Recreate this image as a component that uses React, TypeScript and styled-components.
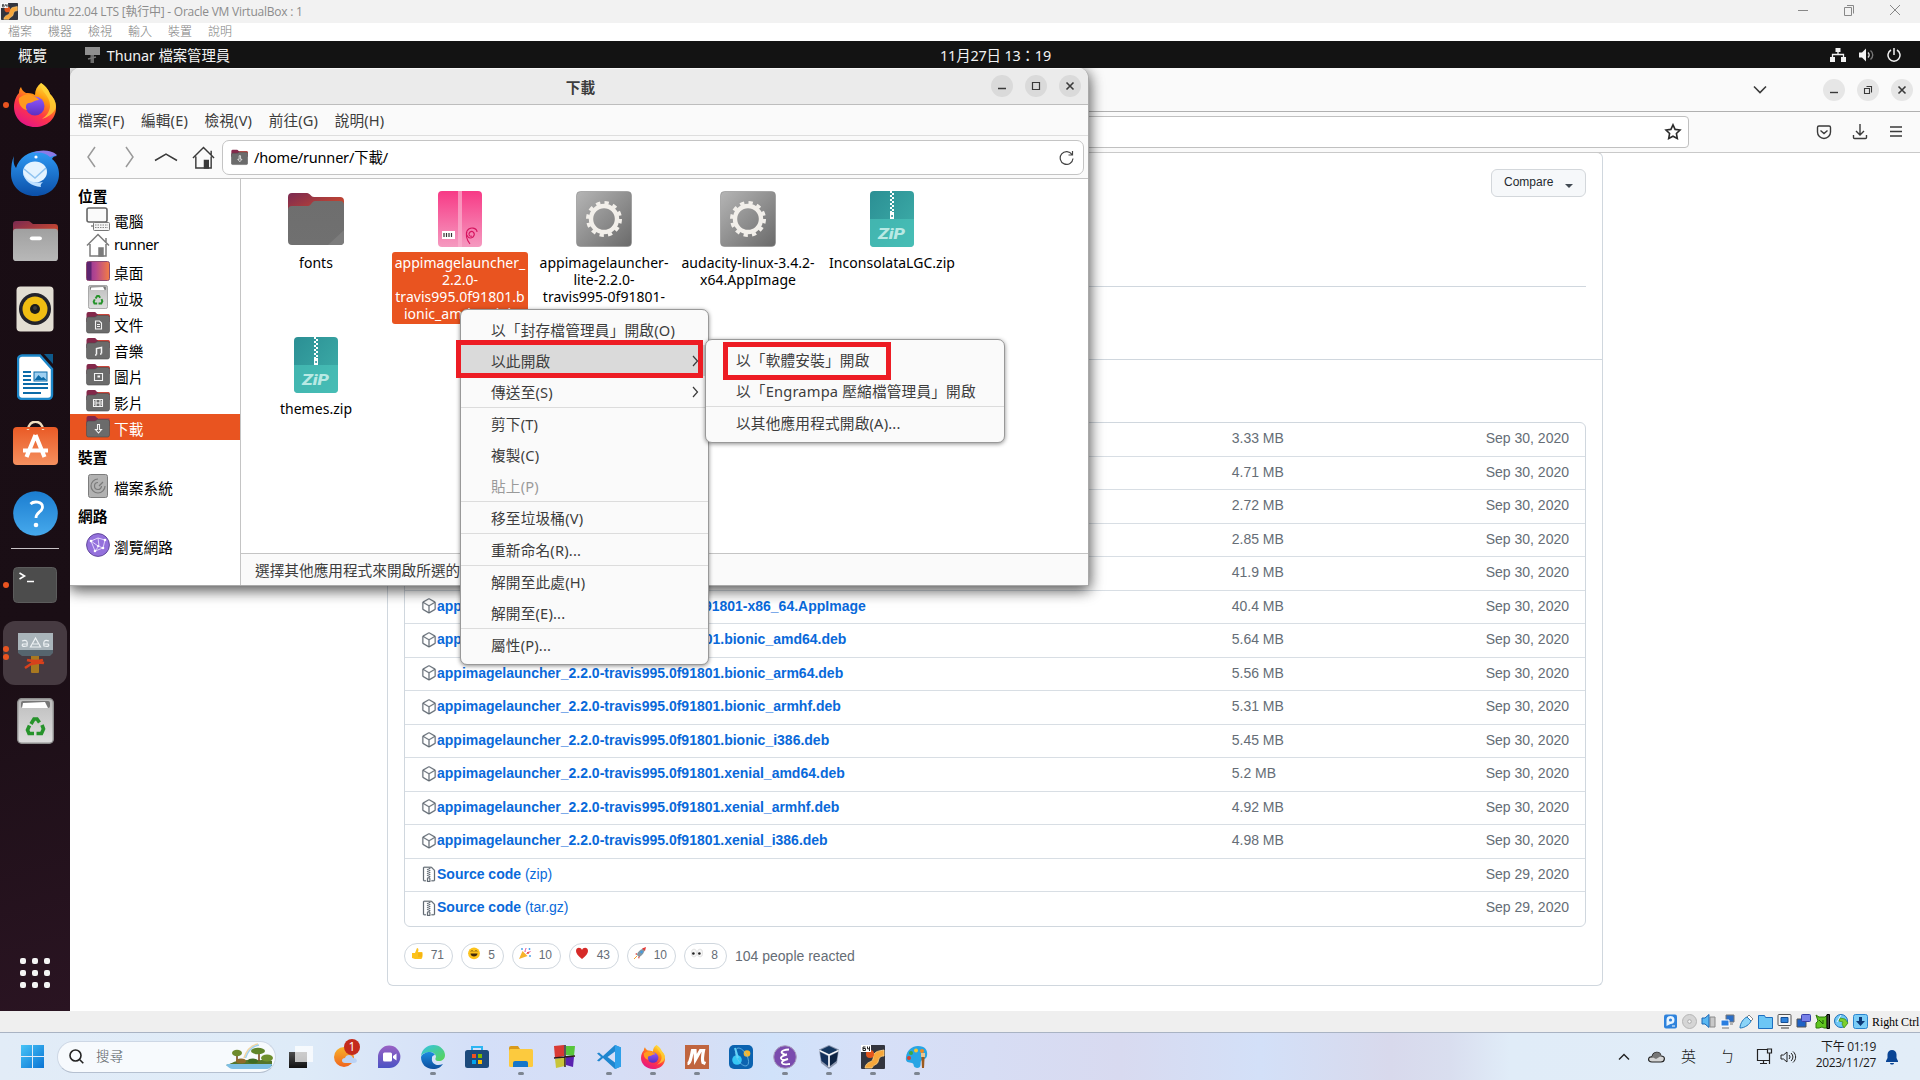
import React from "react";
import styled, { createGlobalStyle } from "styled-components";
import { GoPackage, GoFileZip } from "react-icons/go";

const ubuntu = `"Noto Sans", "Noto Sans CJK TC", sans-serif`;
const arial = `"Liberation Sans", "Noto Sans CJK TC", sans-serif`;
const segoe = `"Open Sans", "Noto Sans CJK TC", sans-serif`;

const Global = createGlobalStyle`
  * { box-sizing: border-box; }
  body { margin: 0; background: #fff; overflow: hidden; }
  svg { display: block; flex: none; }
`;

const Screen = styled.div`
  width: 1920px;
  height: 1080px;
  display: flex;
  flex-direction: column;
  overflow: hidden;
  font-family: ${ubuntu};
`;

/* ---------- VirtualBox frame ---------- */
const HostTitle = styled.header`
  height: 23px;
  flex: none;
  display: flex;
  align-items: center;
  padding: 0 17px 1px 1px;
  background: #f2f2f2;
  color: #8c8c8c;
  font: 12px/20px ${segoe};
  letter-spacing: -0.24px;
`;
const HostCaption = styled.span`
  margin-left: 6px;
  padding-top: 1px;
  flex: 1;
  white-space: nowrap;
`;
const HostControls = styled.div`
  display: flex;
  gap: 30px;
  padding-bottom: 2px;
`;
const HostMenu = styled.nav`
  height: 18px;
  flex: none;
  display: flex;
  gap: 16px;
  padding-left: 8px;
  background: #fff;
  color: #808080;
  font: 12px/16px "Noto Sans CJK TC", sans-serif;
  font-weight: 300;
`;
const VmStatus = styled.footer`
  height: 21px;
  flex: none;
  display: flex;
  align-items: center;
  justify-content: flex-end;
  gap: 4px;
  padding-right: 1px;
  background: #efefef;
  color: #000;
  font: 12px/20px "Liberation Serif", serif;
`;
const HostKey = styled.span`
  width: 47px;
  white-space: nowrap;
  letter-spacing: -0.1px;
`;

/* ---------- GNOME shell ---------- */
const TopBar = styled.div`
  height: 27px;
  flex: none;
  display: grid;
  grid-template-columns: 922px 120px 1fr;
  align-items: center;
  padding: 0 19px 0 18px;
  background: #131313;
  color: #f2f2f2;
  font-size: 14.4px;
  line-height: 26px;
  white-space: nowrap;
`;
const TopLeft = styled.div`
  display: flex;
  align-items: center;
  padding-top: 1px;
`;
const AppName = styled.span`
  margin-left: 7px;
  letter-spacing: -0.1px;
`;
const AppIcon = styled.span`
  margin-left: 38px;
`;
const Clock = styled.span`
  padding-top: 2px;
  letter-spacing: -0.15px;
`;
const TopRight = styled.div`
  display: flex;
  justify-content: flex-end;
  gap: 13px;
`;
const Guest = styled.div`
  flex: 1;
  display: flex;
  min-height: 0;
`;
const Dock = styled.aside`
  width: 70px;
  flex: none;
  display: flex;
  flex-direction: column;
  padding: 3px 0 13px;
  background: linear-gradient(165deg, #190d14 0%, #1a0e15 60%, #2a1422 100%);
`;
const Slot = styled.div<{ $active?: boolean; $lift?: number }>`
  position: relative;
  width: 64px;
  height: 64px;
  margin: 2px 3px;
  padding-bottom: ${(p) => p.$lift ?? 0}px;
  flex: none;
  display: flex;
  align-items: center;
  justify-content: center;
  border-radius: 12px;
  background: ${(p) => (p.$active ? "#463a41" : "transparent")};
`;
const Dots = styled.span`
  position: absolute;
  left: 0;
  top: 0;
  height: 100%;
  display: flex;
  flex-direction: column;
  justify-content: center;
  gap: 2px;
`;
const RunDot = styled.i`
  width: 6px;
  height: 6px;
  border-radius: 50%;
  background: #e95420;
`;
const DockRule = styled.div`
  height: 1px;
  margin: 1px 11px 2px;
  flex: none;
  background: #c8c3c6;
`;
const AppGrid = styled.div`
  margin: auto auto 10px;
  display: grid;
  grid-template-columns: repeat(3, 6px);
  gap: 6px;
`;
const GridDot = styled.i`
  height: 6px;
  border-radius: 2px;
  background: #f4f4f4;
`;
const Desktop = styled.main`
  position: relative;
  flex: 1;
  overflow: hidden;
`;

/* ---------- Browser ---------- */
const Browser = styled.section`
  height: 100%;
  display: flex;
  flex-direction: column;
  background: #fff;
`;
const TabStrip = styled.div`
  height: 44px;
  flex: none;
  display: flex;
  align-items: center;
  justify-content: flex-end;
  gap: 12px;
  padding-right: 7px;
  background: #fafafa;
  border-bottom: 1px solid #b0b0b0;
`;
const TabChevron = styled.span`
  margin-right: 44px;
`;
const RoundButton = styled.button<{ $tone: string }>`
  width: 22px;
  height: 22px;
  padding: 0;
  border: 0;
  border-radius: 50%;
  display: grid;
  place-items: center;
  background: ${(p) => p.$tone};
`;
const NavBar = styled.div`
  height: 41px;
  flex: none;
  display: flex;
  align-items: center;
  padding-right: 16px;
  background: #fafafa;
  border-bottom: 1px solid #c9c9c9;
`;
const UrlField = styled.div`
  width: 1519px;
  height: 32px;
  margin: 0 127px 0 100px;
  display: flex;
  align-items: center;
  justify-content: flex-end;
  padding-right: 6px;
  background: #fff;
  border: 1px solid #c0c0c0;
  border-radius: 4px;
`;
const NavIcons = styled.div`
  display: flex;
  gap: 20px;
`;
const Page = styled.div`
  flex: 1;
  padding-left: 317px;
  font-family: ${arial};
`;
const Release = styled.article`
  width: 1216px;
  height: 834px;
  margin-top: -1px;
  border: 1px solid #d0d7de;
  border-top-color: #c9c9c9;
  border-radius: 6px;
`;
const ReleaseHead = styled.div`
  height: 134px;
  margin: 0 16px;
  padding-top: 16px;
  display: flex;
  justify-content: flex-end;
  align-items: flex-start;
  border-bottom: 1px solid #d0d7de;
`;
const CompareButton = styled.button`
  width: 95px;
  height: 28px;
  padding: 0 12px 3px;
  display: flex;
  align-items: center;
  justify-content: space-between;
  border: 1px solid #d3d7db;
  border-radius: 6px;
  background: #f6f8fa;
  color: #24292f;
  font: 500 12px/20px ${arial};
`;
const CaretDown = styled.i`
  margin-top: 8px;
  border: 4px solid transparent;
  border-top-color: #424a53;
  border-bottom: 0;
`;
const ReleaseBody = styled.div`
  height: 73px;
  border-bottom: 1px solid #d0d7de;
`;
const Assets = styled.ul`
  width: 1182px;
  height: 505px;
  margin: 62px 0 0 16px;
  padding: 0;
  list-style: none;
  border: 1px solid #d0d7de;
  border-radius: 6px;
`;
const Asset = styled.li`
  display: flex;
  align-items: center;
  height: 33px;
  padding: 0 16px 3px;
  color: #656d76;
  font-size: 14px;
  line-height: 20px;
  white-space: nowrap;
  border-top: 1px solid #d8dee4;
  &:nth-child(odd) { height: 34px; }
  &:first-child { border-top: 0; height: 33px; }
  & > svg { margin-top: 1px; stroke: currentColor; stroke-width: 0.35; }
`;
const AssetName = styled.a`
  flex: 1;
  color: #0969da;
`;
const AssetSize = styled.span`
  width: 254px;
`;
const Reactions = styled.div`
  display: flex;
  align-items: center;
  gap: 8px;
  margin: 16px 0 0 16px;
  color: #656d76;
  font-size: 14px;
`;
const Pill = styled.span<{ $w: number }>`
  width: ${(p) => p.$w}px;
  height: 26px;
  display: flex;
  justify-content: space-between;
  padding: 3px 8px 0 6px;
  border: 1px solid #d0d7de;
  border-radius: 13px;
  font-size: 12px;
  line-height: 17px;
`;

/* ---------- Thunar ---------- */
const Window = styled.section`
  position: absolute;
  left: 0;
  top: 0;
  width: 1019px;
  height: 518px;
  display: flex;
  flex-direction: column;
  background: #fafafa;
  border-radius: 10px 10px 0 0;
  border: solid #a9a9a9;
  border-width: 0 1px 1px 0;
  box-shadow: 0 3px 14px rgba(0, 0, 0, 0.45), 0 4px 16px rgba(0, 0, 0, 0.4);
  color: #3d3d3d;
  font-size: 14.67px;
  overflow: hidden;
`;
const WinTitle = styled.div`
  height: 37px;
  flex: none;
  display: grid;
  grid-template-columns: 1fr auto 1fr;
  align-items: center;
  padding: 0 7px 0 10px;
  background: #ebebeb;
  border-bottom: 1px solid #bdbdbd;
  border-top: 1px solid #f8f8f8;
  font-weight: 700;
  line-height: 30px;
`;
const WinButtons = styled.div`
  display: flex;
  justify-content: flex-end;
  gap: 12px;
  padding-bottom: 2px;
`;
const WinMenu = styled.nav`
  height: 31px;
  flex: none;
  display: flex;
  align-items: center;
  gap: 16.5px;
  padding: 0 0 0 8px;
  border-bottom: 1px solid #dedede;
  line-height: 28px;
`;
const MenuTitle = styled.span`
  letter-spacing: 0.15px;
`;
const ToolRow = styled.div`
  height: 43px;
  flex: none;
  display: flex;
  align-items: center;
  padding: 0 4px 0 10px;
  border-bottom: 1px solid #c4c4c4;
`;
const Tool = styled.span<{ $w: number; $gap?: number }>`
  width: ${(p) => p.$w}px;
  margin-left: ${(p) => p.$gap ?? 0}px;
  flex: none;
  display: flex;
  justify-content: center;
`;
const PathField = styled.div`
  flex: 1;
  height: 35px;
  display: flex;
  align-items: center;
  gap: 6px;
  padding: 0 9px 0 8px;
  background: #fff;
  border: 1px solid #c4c4c4;
  border-radius: 7px;
  color: #000;
`;
const PathText = styled.span`
  flex: 1;
  letter-spacing: -0.2px;
  font-size: 14.5px;
  line-height: 24px;
`;
const WinBody = styled.div`
  flex: 1;
  display: flex;
  min-height: 0;
`;
const Side = styled.aside`
  width: 171px;
  flex: none;
  background: #fff;
  border-right: 1px solid #c4c4c4;
  color: #000;
`;
const SideHead = styled.h3<{ $first?: boolean }>`
  margin: 0;
  height: ${(p) => (p.$first ? 27 : 33)}px;
  padding: 4px 0 0 8px;
  font-size: 14.67px;
  line-height: 27px;
  font-weight: 700;
`;
const SideRow = styled.div<{ $on?: boolean }>`
  height: 26px;
  display: flex;
  align-items: center;
  gap: 4px;
  padding-left: 16px;
  line-height: 26px;
  background: ${(p) => (p.$on ? "#e95420" : "transparent")};
  color: ${(p) => (p.$on ? "#fff" : "#000")};
`;
const SideLabel = styled.span<{ $latin?: boolean }>`
  padding-top: ${(p) => (p.$latin ? 0 : 3)}px;
  margin-top: ${(p) => (p.$latin ? -2 : 0)}px;
  letter-spacing: ${(p) => (p.$latin ? "-0.5px" : "0.1px")};
`;
const PlaceIcon = styled.span`
  width: 24px;
  display: flex;
  justify-content: center;
`;
const Main = styled.div`
  flex: 1;
  display: flex;
  flex-direction: column;
  background: #fff;
`;
const Files = styled.div`
  flex: 1;
  display: grid;
  grid-template-columns: repeat(5, 144px);
  grid-auto-rows: 146px;
  padding: 11px 0 0 3px;
`;
const FileCell = styled.div`
  display: flex;
  flex-direction: column;
  align-items: center;
  color: #000;
`;
const IconBox = styled.div`
  height: 58px;
  display: flex;
  align-items: center;
`;
const FileLabel = styled.div<{ $on?: boolean }>`
  width: ${(p) => (p.$on ? "136px" : "142px")};
  margin-top: 4px;
  padding: 2px 0;
  border-radius: 3px;
  background: ${(p) => (p.$on ? "#e95420" : "transparent")};
  color: ${(p) => (p.$on ? "#fff" : "#000")};
  font-size: 14px;
  line-height: 17px;
  letter-spacing: 0.03px;
  text-align: center;
  white-space: pre;
`;
const WinStatus = styled.div`
  height: 32px;
  padding-left: 14px;
  background: #fafafa;
  border-top: 1px solid #c4c4c4;
  line-height: 33px;
`;

/* ---------- Popup menus ---------- */
const Popup = styled.div<{ $x: number; $y: number; $w: number; $h: number }>`
  position: absolute;
  left: ${(p) => p.$x}px;
  top: ${(p) => p.$y}px;
  width: ${(p) => p.$w}px;
  height: ${(p) => p.$h}px;
  padding-top: 4px;
  background: #fafafa;
  border: 1px solid #999;
  border-radius: 7px;
  box-shadow: 0 1px 4px rgba(0, 0, 0, 0.45);
  color: #3d3d3d;
`;
const Item = styled.div<{ $on?: boolean; $off?: boolean; $rule?: boolean }>`
  height: ${(p) => (p.$rule ? 32 : 31)}px;
  display: flex;
  align-items: center;
  justify-content: space-between;
  padding: 0 9px 0 30px;
  background: ${(p) => (p.$on ? "#dadada" : "transparent")};
  color: ${(p) => (p.$off ? "#9a9a9a" : "#3d3d3d")};
  border-bottom: ${(p) => (p.$rule ? "1px solid #dcdcdc" : "0")};
  font-size: 14.67px;
  line-height: 26px;
  letter-spacing: 0.18px;
  white-space: nowrap;
`;
const Mark = styled.div<{ $x: number; $y: number; $w: number; $h: number }>`
  position: absolute;
  left: ${(p) => p.$x}px;
  top: ${(p) => p.$y}px;
  width: ${(p) => p.$w}px;
  height: ${(p) => p.$h}px;
  border: 5px solid #ed1c24;
`;

/* ---------- Windows taskbar ---------- */
const Taskbar = styled.footer`
  height: 48px;
  flex: none;
  display: flex;
  align-items: center;
  padding: 0 21px;
  border-top: 1px solid #a9b3c3;
  background: linear-gradient(90deg, #e2ecf7 0, #deebf8 300px, #d4dff8 480px, #d6def6 620px, #d8ddf3 670px, #d0e2fa 770px, #d6e0f8 860px, #d8daf0 1120px, #d3e0f8 1260px, #d8d9ec 1390px, #d9deef 1450px, #e0ecf8 1510px, #e2edf8 100%);
  font-family: ${segoe};
`;
const SearchBox = styled.div`
  width: 219px;
  height: 32px;
  margin: 0 13px;
  padding: 0 1px 0 11px;
  display: flex;
  align-items: center;
  gap: 12px;
  border-radius: 16px;
  background: #f7fafd;
  border: 1px solid #cdd7e5;
  border-bottom-color: #b5c0d0;
  color: #55595e;
  font: 13.5px/28px "Noto Sans CJK TC", sans-serif;
  font-weight: 300;
`;
const SearchLabel = styled.span`
  flex: 1;
  padding-bottom: 3px;
  white-space: nowrap;
`;
const Apps = styled.div`
  display: flex;
  gap: 20px;
`;
const TaskApp = styled.div`
  position: relative;
  width: 24px;
  height: 24px;
`;
const RunBar = styled.i`
  position: absolute;
  left: 9px;
  top: 27px;
  width: 6px;
  height: 3px;
  border-radius: 2px;
  background: #7d8591;
`;
const Badge = styled.b`
  position: absolute;
  right: -3px;
  top: -6px;
  width: 16px;
  height: 16px;
  border-radius: 50%;
  background: #c42b1c;
  color: #fff;
  font: 12px/16px ${segoe};
  text-align: center;
`;
const Tray = styled.div`
  margin-left: auto;
  display: flex;
  align-items: center;
  color: #1b1b1b;
`;
const Ime = styled.span<{ $ml: number }>`
  width: 16px;
  margin-left: ${(p) => p.$ml}px;
  padding-bottom: 2px;
  font: 15px/24px "Noto Sans CJK TC", sans-serif;
  font-weight: 300;
`;
const TrayGap = styled.span<{ $ml: number }>`
  margin-left: ${(p) => p.$ml}px;
`;
const TrayClock = styled.div`
  width: 63px;
  margin: -3px 9px 0 16px;
  text-align: right;
  font-size: 12px;
  line-height: 16.5px;
  letter-spacing: -0.35px;
  white-space: nowrap;
`;

/* ---------- Drawings ---------- */
const Grad = ({ id, a, b, h }: { id: string; a: string; b: string; h?: boolean }) => (
  <linearGradient id={id} x1="0" y1="0" x2={h ? "1" : "0"} y2="1">
    <stop offset="0" stopColor={a} />
    <stop offset="1" stopColor={b} />
  </linearGradient>
);

const Firefox = ({ w, h, id }: { w: number; h: number; id: string }) => (
  <svg width={w} height={h} viewBox="0 0 42 44" preserveAspectRatio="none">
    <defs>
      <linearGradient id={id} x1=".85" y1="0" x2=".3" y2="1">
        <stop offset="0" stopColor="#fff44f" />
        <stop offset=".35" stopColor="#ff980e" />
        <stop offset=".65" stopColor="#ff3647" />
        <stop offset="1" stopColor="#e31587" />
      </linearGradient>
      <Grad id={id + "p"} a="#9059ff" b="#5b2fc0" />
    </defs>
    <path fill={`url(#${id})`} d="M27 0c6 4 8 8 9 11 5 5 6 10 6 14 0 11-9 19-21 19S0 35 0 24C0 17 3 12 5 10c0-3 1-5 2-6 1 3 2 4 5 6 2 0 6 0 9 2 0-5 2-9 6-12z" />
    <circle cx="21" cy="23" r="9.5" fill={`url(#${id}p)`} />
    <path fill="#ff9a1f" d="M5 15c5-4 11-5 14-2 3 1 5 2 6 4-5 0-6 3-10 3-3 0-4 4-2 7C7 26 4 20 5 15z" />
    <path fill="#ffd43a" opacity=".75" d="M27 0c-2 8 10 12 9 24-1 6-4 9-8 12 12-4 14-11 14-13 0-4-2-8-6-12-1-3-3-7-9-11z" />
  </svg>
);

const Thunderbird = () => (
  <svg width="48" height="46" viewBox="0 0 48 46">
    <defs><Grad id="tb" a="#2f9bf5" b="#0b4fa8" /></defs>
    <path fill="url(#tb)" d="M3 6c-1 6 0 9 2 12C8 8 17 1 30 1c9 0 13 2 16 5-3 0-4 1-5 3 5 4 7 9 7 15 0 13-10 22-24 22S0 36 0 24C0 16 1 10 3 6z" />
    <path fill="#8a7be8" d="M22 3c5-3 17-4 24 2l-7 2C33 2 28 2 22 3z" />
    <circle cx="25" cy="7" r="1.6" fill="#fff" />
    <ellipse cx="24" cy="22" rx="12" ry="10.5" fill="#e4f3ff" />
    <path d="M13 19l11 9 11-10" fill="none" stroke="#8fc3f0" strokeWidth="1.6" />
    <path fill="#bfe0ff" d="M12 22c2 8 10 12 20 10-2 2-3 3-2 5-10-1-17-6-18-15z" />
  </svg>
);

const FolderIcon = ({ w, h, id, drawer }: { w: number; h: number; id: string; drawer?: boolean }) => (
  <svg width={w} height={h} viewBox="0 0 56 52" preserveAspectRatio="none">
    <defs>
      <Grad id={id} a="#7a2a52" b="#e95420" h />
      <Grad id={id + "f"} a={drawer ? "#a0a0a0" : "#6e6e6e"} b={drawer ? "#b8b8b8" : "#707070"} />
    </defs>
    <path fill={`url(#${id})`} d="M0 4a4 4 0 014-4h15c3 0 4 4 7 4h26a4 4 0 014 4v20H0z" />
    <path fill={`url(#${id}f)`} d={drawer ? "M0 14a4 4 0 014-4h48a4 4 0 014 4v34a4 4 0 01-4 4H4a4 4 0 01-4-4z" : "M0 17a4 4 0 014-4h16c3 0 4-5 7-5h25a4 4 0 014 4v36a4 4 0 01-4 4H4a4 4 0 01-4-4z"} />
    {drawer ? <rect x="21" y="20" width="15" height="5" rx="2.5" fill="#fff" /> : <path d="M56 37v11a4 4 0 01-4 4H40z" fill="#7c7c7c" />}
  </svg>
);

const Rhythmbox = () => (
  <svg width="38" height="46" viewBox="0 0 38 46">
    <rect x=".5" y=".5" width="37" height="45" rx="4" fill="#e3ded3" />
    <circle cx="19" cy="23" r="16" fill="#23232b" />
    <circle cx="19" cy="23" r="12.5" fill="#f0bd12" />
    <circle cx="19" cy="23" r="5" fill="#1c1c1c" />
    <circle cx="19" cy="22" r="2" fill="#3c3c3c" />
  </svg>
);
const Writer = () => (
  <svg width="37" height="46" viewBox="0 0 37 46">
    <path d="M5 1.5h18L35 15v26a4 4 0 01-4 4H5a4 4 0 01-4-4V5.5a4 4 0 014-4z" fill="#fff" stroke="#1c86c8" strokeWidth="2.4" />
    <path d="M27 0h9v10z" fill="#0e5a8c" />
    <path d="M6 18h8M6 22h8M6 26h8M6 30h25M6 34h25M6 39h18" stroke="#0d6ba8" strokeWidth="1.8" />
    <rect x="17" y="18" width="13" height="9" fill="#9ed0f2" stroke="#0d6ba8" />
    <path d="M17.5 26l4-5 3 3 2-1 3 3z" fill="#0d6ba8" />
  </svg>
);
const Software = () => (
  <svg width="45" height="44" viewBox="0 0 45 44">
    <defs><Grad id="sw" a="#e95a25" b="#f5905f" /></defs>
    <path d="M15 9c0-11 15-11 15 0" fill="none" stroke="#f0dfc0" strokeWidth="2.4" />
    <rect y="6" width="45" height="38" rx="4" fill="url(#sw)" />
    <path d="M22.5 14L13.500 36M22.500 14l9 22M10 29.500h25" stroke="#fff" strokeWidth="4.200" fill="none" />
    <path d="M15 9v-1M30 9v-1" stroke="#f0dfc0" strokeWidth="2.4" />
  </svg>
);
const HelpIcon = () => (
  <svg width="45" height="45" viewBox="0 0 45 45">
    <defs><Grad id="hp" a="#1b7dd0" b="#46a9ec" /></defs>
    <circle cx="22.5" cy="22.5" r="22.3" fill="url(#hp)" />
    <path d="M17.500 13c3-3 12-3 12 3 0 5-6.500 5-6.500 11" fill="none" stroke="#fff" strokeWidth="2.8" />
    <circle cx="23" cy="34" r="2.3" fill="#fff" />
  </svg>
);
const TerminalIcon = () => (
  <svg width="44" height="36" viewBox="0 0 44 36">
    <rect x=".5" y=".5" width="43" height="35" rx="4" fill="#4c4c4c" stroke="#5c5c5c" />
    <path d="M6.500 6l5 3-5 3M14 14.500h7" fill="none" stroke="#fff" strokeWidth="1.600" />
  </svg>
);
const Hammer = () => (
  <svg width="37" height="42" viewBox="0 0 37 42">
    <rect x="14" y="20" width="8" height="21" rx="1" fill="#a87820" />
    <path d="M1 1h35v19l-3 2H5l-4-2z" fill="#a9b4ba" />
    <path d="M1 18h35v3l-3 3H5l-4-3z" fill="#56656e" />
    <path d="M5 9c5-2 6 1 5 5-4 1-6 0-4-2h4M18.500 6l-5 9h10zM16 12h5M32 9c-5-2-6 1-5 5 4 1 6 0 4-2h-4" fill="none" stroke="#eef2f4" strokeWidth="1.200" />
    <path d="M10 28c4 1 10 2 16 0M14 32c5-1 9-2 13-1M17 30l-9 6" stroke="#d8401c" strokeWidth="2.600" fill="none" />
  </svg>
);
const Recycle = ({ w, h }: { w: number; h: number }) => (
  <svg width={w} height={h} viewBox="0 0 37 46" preserveAspectRatio="none">
    <defs><Grad id="tr" a="#bdbdbd" b="#dedede" /></defs>
    <rect x=".7" y=".7" width="35.6" height="44.6" rx="4" fill="url(#tr)" stroke="#8d8d8d" strokeWidth="1.4" />
    <rect x="4" y="3" width="29" height="7" rx="2" fill="#777" />
    <path d="M6 5l22-1 3 6H5z" fill="#fff" />
    <g fill="none" stroke="#26932b" strokeWidth="3.600">
      <path d="M14 26l3-5h3l2.500 3.500" />
      <path d="M25 27l1.500 4-2 4.500h-5" />
      <path d="M17 35.500h-5l-1.500-3.500 2-4.500" />
    </g>
  </svg>
);

const GearFile = () => (
  <svg width="56" height="56" viewBox="0 0 56 56">
    <defs><Grad id="gf" a="#b5b5b5" b="#6a6a6a" h /></defs>
    <rect x=".5" y=".5" width="55" height="55" rx="4" fill="url(#gf)" stroke="#8b8b8b" strokeWidth=".6" />
    <circle cx="28" cy="28" r="13" fill="none" stroke="#f2efea" strokeWidth="4.4" />
    <circle cx="28" cy="28" r="16.3" fill="none" stroke="#f2efea" strokeWidth="3.4" strokeDasharray="4.3 4.235" />
  </svg>
);
const DebFile = () => (
  <svg width="44" height="56" viewBox="0 0 44 56">
    <defs><Grad id="df" a="#f73a86" b="#f59ac0" /></defs>
    <rect width="44" height="56" rx="4" fill="url(#df)" />
    <path d="M20 0h4v56h-4z" fill="#fbb0cf" opacity=".7" />
    <rect x="4" y="40" width="13" height="8" fill="#fff" />
    <path d="M6 42v4M8.500 42v4M11 42v4M13.500 42v4" stroke="#333" strokeWidth="1.200" />
    <path d="M34 45c-3 1-4-2-2-4 3-2 6 2 3 5-4 3-8-2-6-6 3-5 10-3 10 1M29 41c-2 4 0 8 3 12" fill="none" stroke="#d6145f" strokeWidth="1.100" />
  </svg>
);
const ZipWord = styled.text`
  font: italic 900 14px "Roboto", sans-serif;
  fill: #b9e9e4;
`;
const ZipFile = ({ id }: { id: string }) => (
  <svg width="44" height="56" viewBox="0 0 44 56">
    <defs><Grad id={id} a="#2b8f94" b="#3fb0aa" h /></defs>
    <rect width="44" height="56" rx="4" fill={`url(#${id})`} />
    <path d="M0 28h44v24a4 4 0 01-4 4H4a4 4 0 01-4-4z" fill="#4cc4bb" opacity=".65" />
    <path d="M21 0v21M23 2v19" stroke="#fff" strokeWidth="2" strokeDasharray="2 2" />
    <rect x="20" y="21" width="4" height="7" fill="#fff" />
    <rect x="21.3" y="24" width="1.5" height="2" fill="#2b8f94" />
    <ZipWord x="8" y="48" textLength="27" lengthAdjust="spacingAndGlyphs">ZiP</ZipWord>
  </svg>
);

const glyphs: Record<string, React.ReactNode> = {
  doc: <path d="M9.500 10h4l2 2v6h-6zM11 13.500h3M11 15.500h3" />,
  music: <path d="M10.500 17.500v-6l5-1v6M9 18h1.500M14 17h1.500" strokeWidth="1.500" />,
  pic: <path d="M8.500 10.500h8v7h-8zM12 13h1.500v1h-1.500z" />,
  film: <path d="M7.500 10.500h9v7h-9zM10 10v8M14 10v8M10 14h4M8 13h1M8 15h1M15 13h1M15 15h1" />,
  down: <path d="M11.500 9.500h2v5h2l-3 3.500-3-3.500h2z" />,
};
const MiniFolder = ({ kind, size = 24 }: { kind: string; size?: number }) => (
  <svg width={size} height={size} viewBox="0 0 24 24">
    <path d="M.5 3a2 2 0 012-2h6c1.500 0 2 2 3 2h10a2 2 0 012 2v6H.5z" fill="#84284a" />
    <path d="M12 3h10a2 2 0 012 2v1H11z" fill="#c8453a" />
    <path d="M.5 8a2 2 0 012-2h6c1.500 0 2-1.500 3-1.500h10a2 2 0 012 2V20a2 2 0 01-2 2h-19a2 2 0 01-2-2z" fill="#6b6b6b" stroke="#4c4c4c" strokeWidth=".6" />
    <g fill="none" stroke="#f3f3f3" strokeWidth="1.1">{glyphs[kind]}</g>
  </svg>
);
const Computer = () => (
  <svg width="24" height="24" viewBox="0 0 24 24">
    <rect x="1" y="1" width="20" height="14" rx="2" fill="#fafafa" stroke="#666" strokeWidth="1.6" />
    <path d="M5 19h3v-3" stroke="#888" fill="none" strokeWidth="1.5" />
    <rect x="7.5" y="15.5" width="16" height="8" rx="1" fill="#f5f5f5" stroke="#777" />
    <path d="M9 18h13M9 20.500h13" stroke="#888" strokeDasharray="1.500 1" />
  </svg>
);
const House = ({ c, size = 24 }: { c: string; size?: number }) => (
  <svg width={size} height={size} viewBox="0 0 24 24" fill="none" stroke={c} strokeWidth="1.5">
    <path d="M1 12.500L12 1.500l11 11M4 11v12h16V11M20 9V5" />
    <path d="M13 15h4v8h-4z" fill={c} />
  </svg>
);
const DesktopIcon = () => (
  <svg width="24" height="24" viewBox="0 0 24 24">
    <defs><linearGradient id="dk"><stop offset="0" stopColor="#8a3493" /><stop offset=".4" stopColor="#b5478f" /><stop offset="1" stopColor="#f47d43" /></linearGradient></defs>
    <rect x=".5" y="2.5" width="23" height="19" rx="2" fill="url(#dk)" stroke="#8d4a70" />
    <path d="M1 3h4.500v18H1z" fill="#5d2470" />
  </svg>
);
const Disk = () => (
  <svg width="24" height="24" viewBox="0 0 24 24">
    <rect x="2.5" y=".5" width="19" height="23" rx="2" fill="#b2b2b2" stroke="#7d7d7d" />
    <path d="M12 5a7 7 0 107 7M12 8.500a3.500 3.500 0 103.500 3.500M17 8l-4 4" fill="none" stroke="#7a7a7a" strokeWidth="1.2" />
  </svg>
);
const Globe = () => (
  <svg width="24" height="24" viewBox="0 0 24 24">
    <circle cx="12" cy="12" r="11.4" fill="#9471dc" stroke="#62499c" />
    <path d="M5 8l7-3 7 2-2 8-8 3-4-10 7 5 5 2M12 5l1 8-4 5" fill="none" stroke="#e9defc" strokeWidth=".9" />
    <g fill="#fff"><circle cx="5" cy="8" r="1.3" /><circle cx="19" cy="7" r="1.3" /><circle cx="17" cy="15" r="1.3" /><circle cx="9" cy="18" r="1.3" /><circle cx="12" cy="13" r="1.1" /></g>
  </svg>
);
const Line = ({ w, h, d, c = "#3a3a3a", s = 1.4 }: { w: number; h: number; d: string; c?: string; s?: number }) => (
  <svg width={w} height={h} viewBox={`0 0 ${w} ${h}`} fill="none" stroke={c} strokeWidth={s}><path d={d} /></svg>
);

/* Windows application icons */
const I = ({ children }: { children: React.ReactNode }) => <svg width="24" height="24" viewBox="0 0 24 24">{children}</svg>;
const VmMachine = ({ size }: { size: number }) => (
  <svg width={size} height={size} viewBox="0 0 24 24">
    <rect width="24" height="24" rx="1" fill="#33353e" />
    <path d="M4 23c1-7 7-5 8-9s-2-2 2-6c2-2 4-2 9-3v6c-5 0-5 3-6 6s-4 2-6 6z" fill="#f6a73b" stroke="#ffd58a" strokeWidth=".8" />
    <circle cx="9" cy="9" r="4" fill="#e4561c" />
    <path d="M0 0h10v7H0z" fill="#fff" />
    <path d="M4.500 2H2v3.500h2.500v-2H2M6.500 1.500v2.300H9M8.500 1.500v4.500" stroke="#222" fill="none" />
  </svg>
);
const apps: { icon: React.ReactNode; run?: boolean; badge?: string }[] = [
  { icon: <I><defs><Grad id="tv" a="#4d4d4d" b="#111" /></defs><path d="M0 7h18v16H0z" fill="url(#tv)" /><path d="M6 1h18v16H6z" fill="#fff" opacity=".72" /></I> },
  { icon: <I><defs><Grad id="we" a="#f7b32b" b="#f0641e" /></defs><circle cx="11" cy="12" r="10" fill="url(#we)" /><path d="M12 18c-4 0-4-5 0-5 1-4 7-4 8 0 5 0 5 5 1 5z" fill="#bcd3f5" /></I>, badge: "1" },
  { icon: <I><defs><Grad id="ch" a="#9a62c4" b="#4a52c4" /></defs><path d="M1 23V12a11.200 11.200 0 1111 11z" fill="url(#ch)" /><rect x="6" y="7.500" width="9" height="9" rx="1.500" fill="#fff" /><path d="M16 11l3.500-2.500v7L16 13z" fill="#fff" /></I> },
  { icon: <I><defs><Grad id="ed" a="#33c2e8" b="#59d64f" h /><Grad id="ee" a="#1a8be0" b="#0d4f9e" /></defs><path d="M0 11C1 4 6 0 12.500 0 19 0 24 5 24 10c0 4-3 6-6 6-4 0-4-2-3-4 0-3-3-5-6-5S2 8 0 11z" fill="url(#ed)" /><path d="M9 7c-4 0-8 2-9 5 0 7 5 12 12 12 5 0 8-2 10-5-7 3-12-1-11-6 0-3 3-3 3-3-1-2-3-3-5-3z" fill="url(#ee)" /></I>, run: true },
  { icon: <I><path d="M7 5V2h10v3" fill="none" stroke="#2cb5f2" strokeWidth="2" /><rect y="5" width="24" height="18" rx="2.5" fill="#1c4a7c" /><path d="M7 9h4v4H7z" fill="#f25022" /><path d="M13 9h4v4h-4z" fill="#7fba00" /><path d="M7 15h4v4H7z" fill="#00a4ef" /><path d="M13 15h4v4h-4z" fill="#ffb900" /></I> },
  { icon: <I><path d="M0 3a2 2 0 012-2h7l2 3v6H0z" fill="#d99a1c" /><rect y="4" width="24" height="18" rx="1.5" fill="#fcca3e" /><path d="M4 22v-4a2 2 0 012-2h11a2 2 0 012 2v4z" fill="#1576c9" /></I>, run: true },
  { icon: <I><path d="M1 1l10-1v11l-9 2z" fill="#d93a34" /><path d="M13 1h9l-1 10-8-1z" fill="#57c63b" /><path d="M2 14l10-2v9l-9 2z" fill="#c8c53a" /><path d="M13 12l8 0-1 10-7-2z" fill="#5a22b0" /><path d="M12 0v22M1 13l21-2" stroke="#2a1818" strokeWidth="1.400" /></I> },
  { icon: <I><path d="M18 0l6 2.500v19L18 24 6 13l-4 3.500L0 15.500 4 12 0 8.500l2-1L6 11z" fill="#1f86cf" /><path d="M18 6.500L10.500 12l7.500 5.500z" fill="#d6dff8" /><path d="M18 0l6 2.500v19L18 24z" fill="#2ea0ea" /></I>, run: true },
  { icon: <Firefox w={24} h={24} id="ffs" />, run: true },
  { icon: <I><path d="M0 0h24v24H0z" fill="#c0653f" /><path d="M2.500 18.500c3 0 4-9 5-13h2.500l.5 9 5-9h3c-1 5-1.500 9-.5 12l2.500 1" fill="none" stroke="#fff" strokeWidth="3.200" /></I>, run: true },
  { icon: <I><rect width="24" height="24" rx="5" fill="#0b63b0" /><circle cx="8" cy="15" r="4.800" fill="#36c8f5" /><path d="M6 3l3 10" stroke="#5fd6fa" strokeWidth="2" /><circle cx="18" cy="8.500" r="3.300" fill="#f6b52c" /><ellipse cx="13" cy="12" rx="5" ry="10" transform="rotate(-30 13 12)" fill="none" stroke="#7cc8ee" strokeWidth=".6" /></I> },
  { icon: <I><circle cx="12" cy="12" r="11.300" fill="#7a4cae" stroke="#a99fbd" /><path d="M16 4.500c-4 0-9 1.500-7 3.500s5 1.500 5 1.500-7 1.500-6 4 7 .5 7 .5-7 1.500-6 4 6 1 8 1" fill="none" stroke="#fff" strokeWidth="1.800" /></I>, run: true },
  { icon: <I><path d="M12 0l10 4.500L20 18l-8 6-8-6L2 4.500z" fill="#8a95ad" /><path d="M12 1l8.500 4L12 9 3.500 5z" fill="#14365f" /><path d="M3 7l8 4v10l-6.500-5z" fill="#14305a" /><path d="M21 7l-8 4v10l6.500-5z" fill="#0e2444" /><path d="M2.500 5.500L12 10l9.500-4.500M12 10v12" stroke="#fff" strokeWidth="1.300" fill="none" /></I>, run: true },
  { icon: <VmMachine size={24} />, run: true },
  { icon: <I><path d="M13 1c7 0 10 4 9 10-1 4-5 3-6 5s1 7-4 7c-5-1-2-4-5-5s-7 0-6-6C2 5 7 1 13 1z" fill="#27a5e4" /><circle cx="11" cy="5.500" r="2" fill="#f7c52b" /><circle cx="6" cy="8" r="2" fill="#39a845" /><circle cx="4" cy="13" r="2" fill="#d9412c" /><circle cx="17" cy="6" r="2" fill="#f28a1e" /><path d="M16.500 8h3v6l-.5 9h-2l-.5-9z" fill="#9c5a1e" /><path d="M16 8h4v4h-4z" fill="#e8c592" /></I>, run: true },
];

const Start = () => (
  <svg width="23" height="23" viewBox="0 0 23 23">
    <defs><Grad id="wn" a="#47c4f7" b="#0a74d4" h /></defs>
    <path d="M0 0h11v11H0zM12 0h11v11H12zM0 12h11v11H0zM12 12h11v11H12z" fill="url(#wn)" />
  </svg>
);
const Scenery = () => (
  <svg width="49" height="27" viewBox="0 0 49 27">
    <path d="M19 15C22 6 27 2 33 1" stroke="#f3d5a0" strokeWidth="1.6" fill="none" /><path d="M20.500 15C23 8 28 3 34 2" stroke="#9fd0ee" strokeWidth="1.4" fill="none" />
    <path d="M1 22c5-1 8-4 12-4s10-2 16-1 14-2 18 1v5H3z" fill="#54752a" />
    <path d="M3 21h44c0 3-3 5-6 5H8c-3 0-5-2-7-4z" fill="#7dbfe4" />
    <path d="M12 10v9M34 8v10" stroke="#7a4a1e" strokeWidth="1.6" />
    <ellipse cx="12" cy="10" rx="5" ry="3.2" fill="#6f8a2c" /><ellipse cx="33" cy="8" rx="7" ry="3.2" fill="#5f8428" />
    <ellipse cx="42" cy="15" rx="6" ry="3.5" fill="#6d8f2d" /><ellipse cx="16" cy="18" rx="5" ry="2.5" fill="#8f6a2a" /><ellipse cx="28" cy="18" rx="5" ry="2.4" fill="#3f6b22" />
  </svg>
);

const V = ({ children }: { children: React.ReactNode }) => <svg width="15" height="15" viewBox="0 0 15 15">{children}</svg>;
const vmIcons = [
  <V><rect x="1" y=".5" width="13" height="14" rx="2" fill="#2f83dc" /><path d="M3.500 12V6a4 4 0 018 0c0 3-2 4-4 4z" fill="#e9f5ff" /><circle cx="7.500" cy="6" r="1.600" fill="#2f83dc" /><path d="M9 12h3" stroke="#fff" /></V>,
  <V><circle cx="7.500" cy="7.500" r="7" fill="#d5d5d5" stroke="#b5b5b5" /><circle cx="7.500" cy="7.500" r="1.800" fill="#f5f5f5" stroke="#aaa" /></V>,
  <V><path d="M9 3h5v10H9z" fill="#c8c8c8" stroke="#8a8a8a" /><path d="M1 4h3l4-3.500v13L4 10H1z" fill="#5ab8f2" stroke="#1b66b5" /></V>,
  <V><path d="M6 1h8v7H6z" fill="#2b6fc7" stroke="#777" /><path d="M1 6h8v6H1z" fill="#2b7fe0" stroke="#fff" /><path d="M2 14h7M10 10h3" stroke="#777" /></V>,
  <V><path d="M10 1l4 4-2 2-4-4z" fill="#fff" stroke="#888" /><path d="M8 3l4 4c-1 3-6 7-11 7 0-5 4-10 7-11z" fill="#8ad4f8" stroke="#2277bb" /></V>,
  <V><path d="M.5 1.500h6l1 2h7v11H.5z" fill="#6cc6f5" stroke="#1d6fc0" /></V>,
  <V><rect x="1" y=".5" width="13" height="11" rx="1" fill="#f5f5f5" stroke="#555" /><path d="M4 3.500h7v5H4z" fill="#2f83dc" stroke="#174f94" /><path d="M4 14h8" stroke="#777" strokeWidth="1.500" /></V>,
  <V><path d="M1 5h9v8H1z" fill="#1f62c4" stroke="#555" /><rect x="5.500" y=".5" width="9" height="7" rx="1" fill="#7780e8" stroke="#3840a8" /></V>,
  <V><path d="M1 1l3 2h6l2-2v13H9l-2-1-3 1H1V9l2-2z" fill="#5fc41f" stroke="#2f7a08" /><path d="M4 6l4 4V6" stroke="#1f5a06" fill="none" /><path d="M12 .5h2.500v14H12z" fill="#444" stroke="#000" /></V>,
  <V><circle cx="7" cy="7" r="6.500" fill="#6fc8f5" stroke="#1d6fb8" /><path d="M6 4l5 1 3 4-4 5-2-4 1-2-4-1z" fill="#7dcf2c" stroke="#3b8a10" strokeWidth=".7" /><path d="M7 1L3 8" stroke="#eaf8ff" /></V>,
  <V><rect x=".5" y=".5" width="14" height="14" rx="2" fill="#7ccdf7" stroke="#2a85cf" /><path d="M6 3h3v4h3l-4.500 5L3 7h3z" fill="#0d3a78" /></V>,
];

const E = ({ children }: { children: React.ReactNode }) => <svg width="12" height="13" viewBox="0 0 12 13">{children}</svg>;
const reactions: [React.ReactNode, string, number][] = [
  [<E><path d="M1 6h3l2-5c2 0 1.500 3 1 4h4c1 0 1 7-1 7H4L1 11z" fill="#fcc21b" /><path d="M7 7h4M7 9h4" stroke="#e59600" strokeWidth=".6" /></E>, "71", 49],
  [<E><circle cx="6" cy="6.300" r="5.900" fill="#fcc21b" /><path d="M2.500 6.500h7c0 4-7 4-7 0z" fill="#422b0d" /><path d="M3 4.500l1-1 1 1M7 4.500l1-1 1 1" stroke="#422b0d" fill="none" strokeWidth=".9" /></E>, "5", 43],
  [<E><path d="M0 12L3.500 4l5 5z" fill="#f7b32b" /><path d="M6 5c0-2 1-3 1-4M7.500 6.500c2-2 3-1 4-2" stroke="#e0409a" fill="none" /><g fill="#3f9be8"><circle cx="3" cy="2" r=".9" /><circle cx="10.500" cy="2" r=".9" /><circle cx="11" cy="9" r=".9" /></g><circle cx="9" cy="6" r=".9" fill="#e5452b" /></E>, "10", 49],
  [<E><path d="M6 12C2 9 0 6 0 4 0 0 5 0 6 3c1-3 6-3 6 1 0 2-2 5-6 8z" fill="#d62a28" /></E>, "43", 50],
  [<E><path d="M3 8c0-3 4-6 8-7 0 4-3 8-6 9z" fill="#8298a5" /><path d="M8 1.500L12 0l-1 4z" fill="#e53935" /><path d="M3 6L1 7l2 1zM6 9l-1 3-1-2z" fill="#d9504a" /><path d="M0 12l3-3" stroke="#f7a02b" /><circle cx="7.500" cy="5" r="1.200" fill="#3f9be8" /></E>, "10", 49],
  [<E><ellipse cx="3" cy="6" rx="2.600" ry="4" fill="#f7f7f7" stroke="#d8d8d8" strokeWidth=".7" /><ellipse cx="9" cy="6" rx="2.600" ry="4" fill="#f7f7f7" stroke="#d8d8d8" strokeWidth=".7" /><circle cx="2.400" cy="6.500" r="1.300" fill="#222" /><circle cx="8.400" cy="6.500" r="1.300" fill="#222" /></E>, "8", 43],
];

/* ---------- Data ---------- */
const deb = "appimagelauncher_2.2.0-travis995.0f91801.";
const assets: [string, string][] = [
  ["", "3.33 MB"], ["", "4.71 MB"], ["", "2.72 MB"], ["", "2.85 MB"], ["", "41.9 MB"],
  ["appimagelauncher-lite-2.2.0-travis995-0f91801-x86_64.AppImage", "40.4 MB"],
  [deb + "bionic_amd64.deb", "5.64 MB"],
  [deb + "bionic_arm64.deb", "5.56 MB"],
  [deb + "bionic_armhf.deb", "5.31 MB"],
  [deb + "bionic_i386.deb", "5.45 MB"],
  [deb + "xenial_amd64.deb", "5.2 MB"],
  [deb + "xenial_armhf.deb", "4.92 MB"],
  [deb + "xenial_i386.deb", "4.98 MB"],
];
const files: { icon: React.ReactNode; label: string; on?: boolean }[] = [
  { icon: <FolderIcon w={56} h={52} id="fo" />, label: "fonts" },
  { icon: <DebFile />, label: "appimagelauncher_\n2.2.0-\ntravis995.0f91801.b\nionic_amd64.deb", on: true },
  { icon: <GearFile />, label: "appimagelauncher-\nlite-2.2.0-\ntravis995-0f91801-" },
  { icon: <GearFile />, label: "audacity-linux-3.4.2-\nx64.AppImage" },
  { icon: <ZipFile id="z1" />, label: "InconsolataLGC.zip" },
  { icon: <ZipFile id="z2" />, label: "themes.zip" },
];
const menuItems: { t: string; rule?: boolean; sub?: boolean; on?: boolean; off?: boolean }[] = [
  { t: "以「封存檔管理員」開啟(O)" },
  { t: "以此開啟", sub: true, on: true },
  { t: "傳送至(S)", sub: true, rule: true },
  { t: "剪下(T)" },
  { t: "複製(C)" },
  { t: "貼上(P)", off: true, rule: true },
  { t: "移至垃圾桶(V)", rule: true },
  { t: "重新命名(R)...", rule: true },
  { t: "解開至此處(H)" },
  { t: "解開至(E)...", rule: true },
  { t: "屬性(P)..." },
];
const dockApps: { icon: React.ReactNode; dots?: number; active?: boolean; lift?: number }[] = [
  { icon: <Firefox w={42} h={44} id="ffb" />, dots: 1 },
  { icon: <Thunderbird />, lift: -2 },
  { icon: <FolderIcon w={45} h={40} id="nf" drawer /> },
  { icon: <Rhythmbox /> },
  { icon: <Writer /> },
  { icon: <Software />, lift: 4 },
  { icon: <HelpIcon /> },
];
const dockRunning: typeof dockApps = [
  { icon: <TerminalIcon />, dots: 1 },
  { icon: <Hammer />, dots: 2, active: true },
  { icon: <Recycle w={37} h={46} /> },
];

const DockItem = ({ icon, dots = 0, active, lift }: (typeof dockApps)[number]) => (
  <Slot $active={active} $lift={lift}>
    <Dots>{Array.from({ length: dots }, (_, i) => <RunDot key={i} />)}</Dots>
    {icon}
  </Slot>
);

const Controls = ({ tone, restore }: { tone: string; restore?: boolean }) => (
  <>
    <RoundButton $tone={tone}><Line w={10} h={10} d="M1 7.500h8" /></RoundButton>
    <RoundButton $tone={tone}>
      {restore ? <Line w={10} h={10} d="M1.500 3.500h5v5h-5zM3.500 1.500h5v6" s={1.1} /> : <Line w={10} h={10} d="M1.500 1.500h7v7h-7z" s={1.2} />}
    </RoundButton>
    <RoundButton $tone={tone}><Line w={10} h={10} d="M1.500 1.500l7 7M8.500 1.500l-7 7" s={1.6} /></RoundButton>
  </>
);

const places: [React.ReactNode, string][] = [
  [<Computer />, "電腦"],
  [<House c="#7b7b7b" />, "runner"],
  [<DesktopIcon />, "桌面"],
  [<Recycle w={20} h={24} />, "垃圾"],
  [<MiniFolder kind="doc" />, "文件"],
  [<MiniFolder kind="music" />, "音樂"],
  [<MiniFolder kind="pic" />, "圖片"],
  [<MiniFolder kind="film" />, "影片"],
  [<MiniFolder kind="down" />, "下載"],
];

export default function App() {
  return (
    <Screen>
      <Global />
      <HostTitle>
        <VmMachine size={17} />
        <HostCaption>Ubuntu 22.04 LTS [執行中] - Oracle VM VirtualBox : 1</HostCaption>
        <HostControls>
          <Line w={16} h={12} d="M3 6.500h10" c="#888" s={1} />
          <Line w={16} h={12} d="M3.500 3.500h7v8h-7zM6 1.500h6.500v8" c="#888" s={1} />
          <Line w={16} h={12} d="M3 1l10 10M13 1L3 11" c="#888" s={1} />
        </HostControls>
      </HostTitle>
      <HostMenu>
        {["檔案", "機器", "檢視", "輸入", "裝置", "說明"].map((m) => <span key={m}>{m}</span>)}
      </HostMenu>
      <TopBar>
        <TopLeft>
          <span>概覽</span>
          <AppIcon>
            <svg width="15" height="18" viewBox="0 0 15 18"><path d="M0 0h15v8H0z" fill="#8f8f8f" /><path d="M5.500 8h3.500v8H5.500z" fill="#6b6b6b" /><path d="M3 12l8-2" stroke="#777" strokeWidth="1.500" /></svg>
          </AppIcon>
          <AppName>Thunar 檔案管理員</AppName>
        </TopLeft>
        <Clock>11月27日 13：19</Clock>
        <TopRight>
          <svg width="16" height="14" viewBox="0 0 16 14"><path d="M5.500 0h5v4h-5zM0 9h5v5H0zM11 9h5v5h-5z" fill="#f2f2f2" /><path d="M8 4v3M2.500 9V6.500h11V9" stroke="#f2f2f2" strokeWidth="1.300" fill="none" /></svg>
          <svg width="15" height="14" viewBox="0 0 15 14"><path d="M0 4.500h3L7 .5v13L3 9.500H0z" fill="#f2f2f2" /><path d="M9 4.500c1.500 1.500 1.500 3.500 0 5" stroke="#ddd" fill="none" strokeWidth="1.400" /><path d="M11.500 2.500c3 2.500 3 6.500 0 9" stroke="#777" fill="none" strokeWidth="1.400" /></svg>
          <svg width="14" height="14" viewBox="0 0 14 14"><path d="M4 2A6 6 0 1010 2M7 0v7" stroke="#f2f2f2" fill="none" strokeWidth="1.500" /></svg>
        </TopRight>
      </TopBar>
      <Guest>
        <Dock>
          {dockApps.map((a, i) => <DockItem key={i} {...a} />)}
          <DockRule />
          {dockRunning.map((a, i) => <DockItem key={i} {...a} />)}
          <AppGrid>{Array.from({ length: 9 }, (_, i) => <GridDot key={i} />)}</AppGrid>
        </Dock>
        <Desktop>
          <Browser>
            <TabStrip>
              <TabChevron><Line w={14} h={10} d="M1 1.500l6 6 6-6" s={1.6} /></TabChevron>
              <Controls tone="#e6e6e6" restore />
            </TabStrip>
            <NavBar>
              <UrlField>
                <Line w={18} h={18} d="M9 1.800l2.100 4.600 4.900.6-3.600 3.500.9 5L9 13.200l-4.300 2.300.9-5L2 7l4.900-.6z" c="#2b2b2b" s={1.6} />
              </UrlField>
              <NavIcons>
                <Line w={16} h={16} d="M1.500 3.500a1.500 1.500 0 011.500-1.500h10a1.500 1.500 0 011.500 1.500V8a6.500 6.500 0 01-13 0zM4.500 6.500L8 9.500l3.500-3" />
                <Line w={16} h={16} d="M8 0v10.500M4 7l4 4 4-4M1.500 11v2.500a1 1 0 001 1h11a1 1 0 001-1V11" />
                <Line w={16} h={16} d="M2 3h12M2 7.500h12M2 12h12" />
              </NavIcons>
            </NavBar>
            <Page>
              <Release>
                <ReleaseHead><CompareButton>Compare<CaretDown /></CompareButton></ReleaseHead>
                <ReleaseBody />
                <Assets>
                  {assets.map(([n, s], i) => (
                    <Asset key={i}>
                      <GoPackage size={16} />
                      <AssetName><b>{n}</b></AssetName>
                      <AssetSize>{s}</AssetSize>
                      <span>Sep 30, 2020</span>
                    </Asset>
                  ))}
                  {["(zip)", "(tar.gz)"].map((n) => (
                    <Asset key={n}>
                      <GoFileZip size={16} />
                      <AssetName><b>Source code</b> {n}</AssetName>
                      <span>Sep 29, 2020</span>
                    </Asset>
                  ))}
                </Assets>
                <Reactions>
                  {reactions.map(([icon, n, w], i) => <Pill key={i} $w={w}>{icon}<span>{n}</span></Pill>)}
                  <span>104 people reacted</span>
                </Reactions>
              </Release>
            </Page>
          </Browser>

          <Window>
            <WinTitle>
              <span />
              <span>下載</span>
              <WinButtons><Controls tone="#dadada" /></WinButtons>
            </WinTitle>
            <WinMenu>
              {["檔案(F)", "編輯(E)", "檢視(V)", "前往(G)", "說明(H)"].map((m) => <MenuTitle key={m}>{m}</MenuTitle>)}
            </WinMenu>
            <ToolRow>
              <Tool $w={22}><Line w={10} h={22} d="M9 1L2 11l7 10" c="#9a9a9a" s={1.5} /></Tool>
              <Tool $w={54} $gap={1}><Line w={10} h={22} d="M1 1l7 10-7 10" c="#9a9a9a" s={1.5} /></Tool>
              <Tool $w={18}><Line w={24} h={10} d="M1 8.500L12 2l11 6.500" s={1.5} /></Tool>
              <Tool $w={38} $gap={9}><House c="#3a3a3a" size={23} /></Tool>
              <PathField>
                <MiniFolder kind="down" size={17} />
                <PathText>/home/runner/下載/</PathText>
                <Line w={15} h={15} d="M13 4.500A6.400 6.400 0 1014 8.500M13.500 1v4H9.500" s={1.2} c="#444" />
              </PathField>
            </ToolRow>
            <WinBody>
              <Side>
                <SideHead $first>位置</SideHead>
                {places.map(([icon, n]) => (
                  <SideRow key={n} $on={n === "下載"}><PlaceIcon>{icon}</PlaceIcon><SideLabel $latin={n === "runner"}>{n}</SideLabel></SideRow>
                ))}
                <SideHead>裝置</SideHead>
                <SideRow><Disk /><SideLabel>檔案系統</SideLabel></SideRow>
                <SideHead>網路</SideHead>
                <SideRow><Globe /><SideLabel>瀏覽網路</SideLabel></SideRow>
              </Side>
              <Main>
                <Files>
                  {files.map((f) => (
                    <FileCell key={f.label}>
                      <IconBox>{f.icon}</IconBox>
                      <FileLabel $on={f.on}>{f.label}</FileLabel>
                    </FileCell>
                  ))}
                </Files>
                <WinStatus>選擇其他應用程式來開啟所選的</WinStatus>
              </Main>
            </WinBody>
          </Window>

          <Popup $x={390} $y={241} $w={249} $h={356}>
            {menuItems.map((m) => (
              <Item key={m.t} $on={m.on} $off={m.off} $rule={m.rule}>
                <span>{m.t}</span>
                {m.sub && <Line w={7} h={12} d="M1 1l4.500 5L1 11" s={1.2} />}
              </Item>
            ))}
          </Popup>
          <Popup $x={635} $y={271} $w={300} $h={104}>
            <Item><span>以「軟體安裝」開啟</span></Item>
            <Item $rule><span>以「Engrampa 壓縮檔管理員」開啟</span></Item>
            <Item><span>以其他應用程式開啟(A)...</span></Item>
          </Popup>
          <Mark $x={386} $y={272} $w={247} $h={38} />
          <Mark $x={653} $y={274} $w={168} $h={38} />
        </Desktop>
      </Guest>
      <VmStatus>
        {vmIcons.map((v, i) => <React.Fragment key={i}>{v}</React.Fragment>)}
        <HostKey>Right Ctrl</HostKey>
      </VmStatus>
      <Taskbar>
        <Start />
        <SearchBox>
          <Line w={15} h={15} d="M10.800 10.800L14.300 14.300M6.500 1a5.500 5.500 0 100 11 5.500 5.500 0 000-11z" c="#222" s={1.6} />
          <SearchLabel>搜尋</SearchLabel>
          <Scenery />
        </SearchBox>
        <Apps>
          {apps.map((a, i) => (
            <TaskApp key={i}>
              {a.icon}
              {a.badge && <Badge>{a.badge}</Badge>}
              {a.run && <RunBar />}
            </TaskApp>
          ))}
        </Apps>
        <Tray>
          <Line w={12} h={8} d="M1 6.500l5-5 5 5" c="#222" s={1.4} />
          <TrayGap $ml={18}><svg width="17" height="12" viewBox="0 0 17 12"><path d="M4 11c-5 0-4-6 0-5 1-6 8-6 9-1 5 0 4 6 0 6z" fill="#d5d5d5" stroke="#222" strokeWidth="1.200" /><path d="M4 6c2-6 8-6 9-1l-5 3z" fill="#777" /></svg></TrayGap>
          <Ime $ml={16}>英</Ime>
          <Ime $ml={23}>ㄅ</Ime>
          <TrayGap $ml={20}><Line w={17} h={17} d="M11 1.500H1.500v11h12V8M7.500 12.500v3M4 15.500h7M11.500 1h4v4h-4zM13.500 5v11" c="#222" s={1.2} /></TrayGap>
          <TrayGap $ml={7}><Line w={17} h={14} d="M1 5h2.500L7 2v10L3.500 9H1zM9 5c1.300 1.300 1.300 2.700 0 4M11 3c2.500 2.500 2.500 5.500 0 8M13 1.500c3.500 3 3.500 8 0 11" c="#222" s={1} /></TrayGap>
          <TrayClock>下午 01:19<br />2023/11/27</TrayClock>
          <svg width="14" height="16" viewBox="0 0 14 16"><path d="M1 12l1.500-3V5.500a4.500 4.500 0 019 0V9L13 12v1H1z" fill="#0a4595" /><path d="M5 14h4c0 2-4 2-4 0z" fill="#0a4595" /></svg>
        </Tray>
      </Taskbar>
    </Screen>
  );
}
